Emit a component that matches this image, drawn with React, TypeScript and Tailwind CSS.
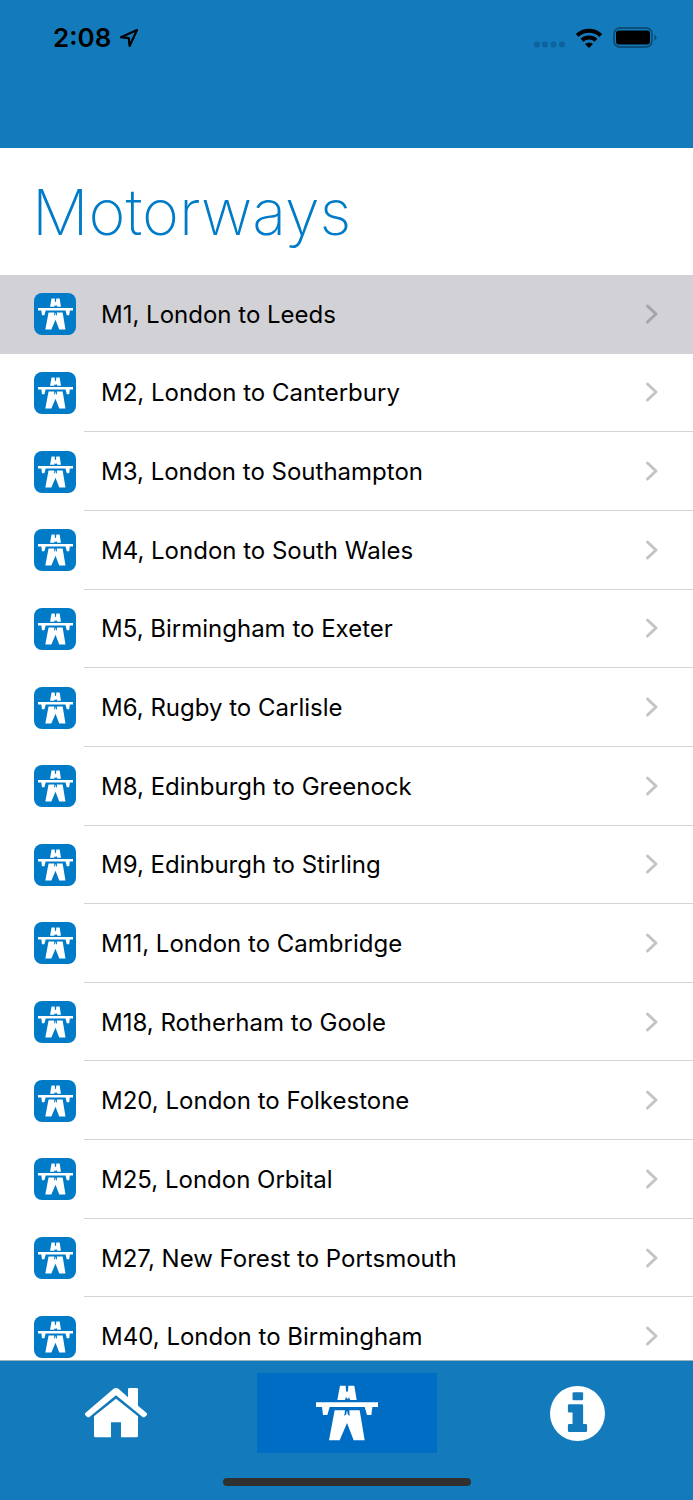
import clsx from 'clsx';

const MOTORWAYS = [
  'M1, London to Leeds',
  'M2, London to Canterbury',
  'M3, London to Southampton',
  'M4, London to South Wales',
  'M5, Birmingham to Exeter',
  'M6, Rugby to Carlisle',
  'M8, Edinburgh to Greenock',
  'M9, Edinburgh to Stirling',
  'M11, London to Cambridge',
  'M18, Rotherham to Goole',
  'M20, London to Folkestone',
  'M25, London Orbital',
  'M27, New Forest to Portsmouth',
  'M40, London to Birmingham',
];

const MotorwayIcon = ({ className }: { className?: string }) => (
  <svg viewBox="0 0 186 168" className={className} fill="currentColor" aria-hidden="true">
    {/* Far carriageways */}
    <path d="M72 2h17l1 15 3 5 3-5 1-15h18l7 43h-20l-3-10-2 6-2 0-2 0-3-6-3 10H64z" />
    {/* Bridge */}
    <path d="M0 52h186v14h-17l-3 24h-13l-7-24H41l-7 24H21l-3-24H0z" />
    {/* Near carriageways */}
    <path d="M56 76h31l-2 17 6-5 1-9h2l1 9 6 5-1-17h31l15 90h-33L93 114l-22 52H39z" />
  </svg>
);

const Chevron = ({ className }: { className?: string }) => (
  <svg
    viewBox="0 0 14 22"
    className={className}
    fill="none"
    stroke="currentColor"
    strokeWidth="3"
    strokeLinecap="round"
    strokeLinejoin="round"
    aria-hidden="true"
  >
    <path d="M2.500 3l8.500 8-8.500 8" />
  </svg>
);

const StatusBar = () => (
  <div className="flex items-center justify-between pt-5 pr-9 pl-[53px]">
    <div className="flex items-center gap-2">
      <span className="text-[26px] leading-9 font-semibold">2:08</span>
      <svg viewBox="0 0 20 20" className="size-5" fill="none" stroke="currentColor" strokeWidth="2.2" strokeLinejoin="round" aria-hidden="true">
        <path d="M18 2L2 9.200l7.800 1 .8 7.800z" />
      </svg>
    </div>
    <div className="flex items-center gap-2.5">
      <svg viewBox="0 0 32 22" className="h-[22px] w-8" fill="#0d639c" aria-hidden="true">
        <circle cx="4" cy="17.500" r="3" />
        <circle cx="12" cy="17.500" r="3" />
        <circle cx="20.500" cy="17.500" r="3" />
        <circle cx="29" cy="17.500" r="3" />
      </svg>
      <svg viewBox="0 0 28 22" className="h-[22px] w-7" fill="none" stroke="currentColor" strokeWidth="4" aria-hidden="true">
        <path d="M2.200 8.500a17 17 0 0 1 23.600 0" />
        <path d="M7 13.300a10.200 10.200 0 0 1 14 0" />
        <path d="M14 21l-4-4a5.800 5.800 0 0 1 8 0z" fill="currentColor" stroke="none" />
      </svg>
      <svg viewBox="0 0 44 22" className="h-[22px] w-11" aria-hidden="true">
        <rect x="1" y="1" width="38" height="19" rx="6" fill="none" stroke="#0b4f78" strokeWidth="1.800" />
        <rect x="3" y="3.500" width="34" height="14" rx="3" />
        <path d="M41.500 7.500q2 1 2 3t-2 3z" fill="#0b4f78" />
      </svg>
    </div>
  </div>
);

const TabBar = () => (
  <nav className="relative h-[140px] shrink-0 border-t border-[#a0b4c0] bg-[#137bbc] pt-3 text-white">
    <div className="grid grid-cols-3 justify-items-center">
      <button type="button" aria-label="Home" className="flex h-20 w-[180px] items-center justify-center">
        <svg viewBox="0 0 186 150" className="h-[50px] w-[62px]" fill="currentColor" aria-hidden="true">
          <path d="M93 0q5 0 9 4l27 24V4q0-4 4-4h22q4 0 4 4v49l25 21q4 4 1 8l-5 4q-4 3-8 0L93 22 14 86q-4 3-8 0l-5-4q-3-4 1-8L84 4q4-4 9-4z" />
          <path d="M93 32l66 53v58q0 5-5 5h-46v-45H78v45H32q-5 0-5-5V85z" />
        </svg>
      </button>
      <button
        type="button"
        aria-label="Motorways"
        aria-current="page"
        className="flex h-20 w-[180px] items-center justify-center bg-[#006dc5]"
      >
        <MotorwayIcon className="h-14 w-[62px]" />
      </button>
      <button type="button" aria-label="Information" className="flex h-20 w-[180px] items-center justify-center">
        <svg viewBox="0 0 166 166" className="size-[55px]" aria-hidden="true">
          <circle cx="83" cy="83" r="83" fill="currentColor" />
          <path d="M72 19h24q4 0 4 4v16q0 4-4 4H72q-4 0-4-4V23q0-4 4-4z" fill="#137bbc" />
          <path d="M58 55h38q4 0 4 4v56h8q4 0 4 4v16q0 4-4 4H58q-4 0-4-4v-16q0-4 4-4h10V80H58q-4 0-4-4V59q0-4 4-4z" fill="#137bbc" />
        </svg>
      </button>
    </div>
    {/* Home indicator */}
    <div className="absolute bottom-3.5 left-1/2 h-2 w-[248px] -translate-x-1/2 rounded-full bg-[#303030]" />
  </nav>
);

const App = () => (
  <div className="flex h-screen flex-col bg-white font-['Inter',sans-serif] text-black">
    <header className="h-37 shrink-0 bg-[#137bbc]">
      <StatusBar />
    </header>

    <main className="min-h-0 flex-1 overflow-hidden">
      <h1 className="px-8 pt-6 pb-[23px] text-[63px] leading-20 font-extralight text-[#007bc7]">Motorways</h1>

      <ul className="grid h-[1101px] auto-rows-fr">
        {MOTORWAYS.map((name, i) => (
          <li key={name} className={clsx(i === 0 && 'bg-[#d1d1d6]')}>
            <a href="#" className="flex h-full pl-[34px]">
              <span className="flex size-[42px] shrink-0 items-center justify-center self-center rounded-lg bg-[#007bc8]">
                <MotorwayIcon className="h-8 w-[35px] text-white" />
              </span>
              <span className={clsx('ml-2 flex flex-1 items-center border-b pr-[34px] pl-[17px]', i === 0 ? 'border-transparent' : 'border-[#d4d4d6]')}>
                <span className="flex-1 pt-0.5 text-[24px] leading-8">{name}</span>
                <Chevron className={clsx('h-[22px] w-3.5', i === 0 ? 'text-[#a4a4a9]' : 'text-[#c4c4c6]')} />
              </span>
            </a>
          </li>
        ))}
      </ul>
    </main>

    <TabBar />
  </div>
);

export default App;
